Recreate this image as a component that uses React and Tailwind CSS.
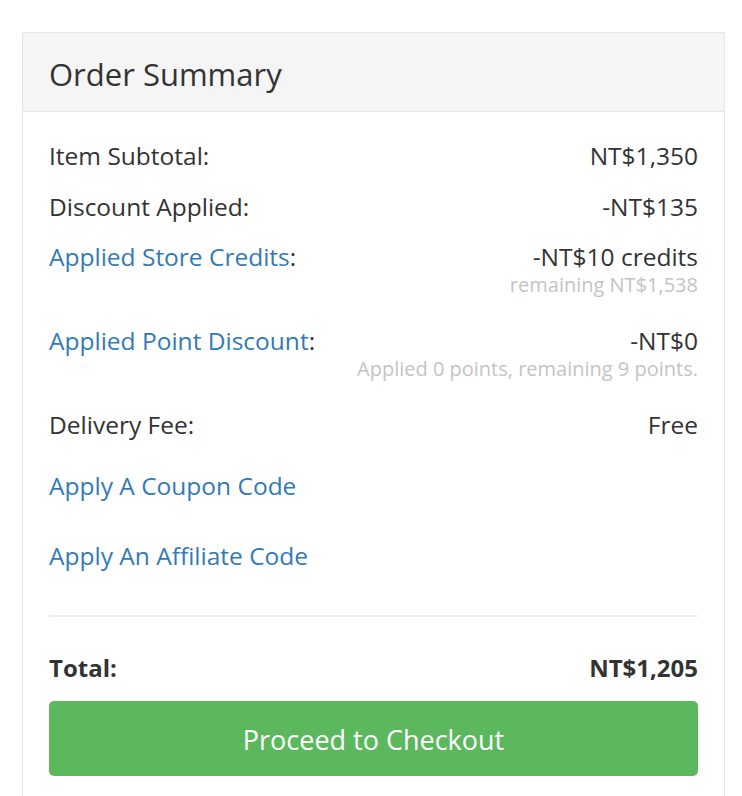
import React from 'react'

const Row = ({ label, value, link, sub, className = '' }) => (
  <div className={className}>
    <div className="flex items-start justify-between leading-7">
      <span>
        {link ? <a href="#" className="text-[#337ab7]">{label}</a> : label}:
      </span>
      <span>{value}</span>
    </div>
    {sub && <div className="text-right text-[20px] leading-7 text-[#c4c4c4]">{sub}</div>}
  </div>
)

const App = () => {
  return (
    <div className="min-h-[796px] bg-white pt-8 px-[22px] font-['Open_Sans',sans-serif] text-[#333]">
      <div className="w-[703px] border border-[#e6e6e6] border-b-0">
        <div className="h-[79px] bg-[#f5f5f5] border-b border-[#e6e6e6] px-[26px] flex items-center pt-1">
          <h2 className="text-[31px] leading-none">Order Summary</h2>
        </div>
        <div className="px-[26px] pt-[30px] pb-5 text-[24.5px]">
          <Row label="Item Subtotal" value="NT$1,350" />
          <Row className="mt-[23px]" label="Discount Applied" value="-NT$135" />
          <Row className="mt-[22px]" label="Applied Store Credits" value="-NT$10 credits" link sub="remaining NT$1,538" />
          <Row className="mt-[28px]" label="Applied Point Discount" value="-NT$0" link sub="Applied 0 points, remaining 9 points." />
          <Row className="mt-[28px]" label="Delivery Fee" value="Free" />
          <a href="#" className="block mt-[33px] leading-7 text-[#337ab7]">Apply A Coupon Code</a>
          <a href="#" className="block mt-[42px] leading-7 text-[#337ab7]">Apply An Affiliate Code</a>
          <hr className="mt-[45px] border-t-2 border-[#eeeeee]" />
          <div className="mt-[37px] flex justify-between leading-7 font-bold text-[24px]">
            <span>Total:</span>
            <span>NT$1,205</span>
          </div>
          <button className="mt-[19px] w-full h-[75px] pt-1 rounded-[5px] bg-[#5cb85c] text-white text-[27px]">
            Proceed to Checkout
          </button>
        </div>
      </div>
    </div>
  )
}

export default App
